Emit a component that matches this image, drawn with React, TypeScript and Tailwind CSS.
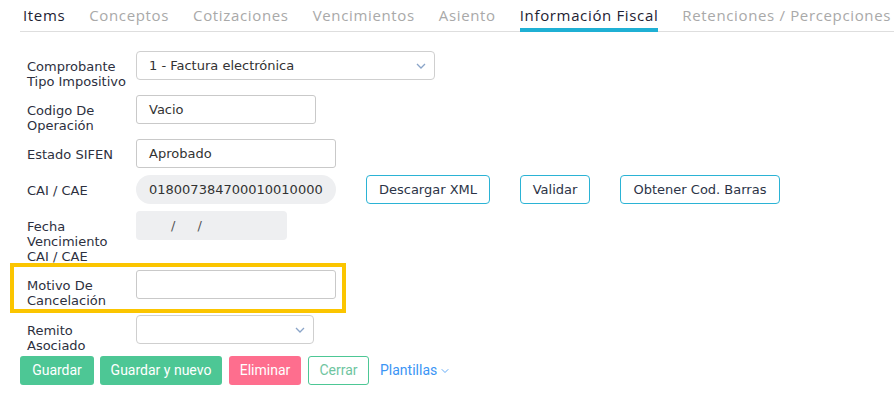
import { ChevronDown } from "lucide-react";

const tabs = [
  { label: "Items", tone: "dark" },
  { label: "Conceptos", tone: "muted" },
  { label: "Cotizaciones", tone: "muted" },
  { label: "Vencimientos", tone: "muted" },
  { label: "Asiento", tone: "muted" },
  { label: "Información Fiscal", tone: "active" },
  { label: "Retenciones / Percepciones", tone: "muted" },
];

function Chevron() {
  return (
    <svg width="10" height="6" viewBox="0 0 10 6" className="text-[#8aa4c8]">
      <polyline points="1,1 5,5 9,1" fill="none" stroke="currentColor" strokeWidth="1.3" />
    </svg>
  );
}

function Label({ lines }: { lines: string[] }) {
  return (
    <div className="w-[109px] shrink-0 pt-[8px] text-[13px] leading-[15px] text-[#2d3040]">
      {lines.map((l) => (
        <div key={l}>{l}</div>
      ))}
    </div>
  );
}

function TextBox({ value, w }: { value?: string; w: string }) {
  return (
    <div className={`${w} h-[29px] flex items-center px-[12px] border border-[#c9c9c9] rounded-[3px] text-[13px] text-[#333]`}>
      {value}
    </div>
  );
}

function SelectBox({ value, w }: { value?: string; w: string }) {
  return (
    <div className={`${w} h-[29px] flex items-center justify-between pl-[12px] pr-[8px] border border-[#cfcfcf] rounded-[4px] text-[13px] text-[#333]`}>
      <span>{value}</span>
      <Chevron />
    </div>
  );
}

function OutlineBtn({ children, w }: { children: string; w: string }) {
  return (
    <button className={`${w} h-[29px] border border-[#2bb3d5] rounded-[4px] text-[13px] text-[#2c3447]`}>
      {children}
    </button>
  );
}

export default function App() {
  return (
    <div className="w-[894px] h-[414px] bg-white overflow-hidden font-['DejaVu_Sans',Verdana,sans-serif]">
      <div className="ml-[20px] flex items-end h-[32px] border-b border-[#dedede] font-['Open_Sans',sans-serif] text-[15px] tracking-[0.65px]">
        <div className="flex gap-[24px] pl-[3px]">
          {tabs.map((t) => (
            <div
              key={t.label}
              className={
                t.tone === "active"
                  ? "pb-[1px] border-b-4 border-[#1fb0d4] text-[#1e2233] whitespace-nowrap -mb-px"
                  : t.tone === "dark"
                  ? "pb-[5px] text-[#1e2233] whitespace-nowrap"
                  : "pb-[5px] text-[#a9a9a9] whitespace-nowrap"
              }
            >
              {t.label}
            </div>
          ))}
        </div>
      </div>

      <div className="pl-[27px] pt-[19px] flex flex-col">
        <div className="flex mb-[6px]">
          <Label lines={["Comprobante", "Tipo Impositivo"]} />
          <SelectBox value="1 - Factura electrónica" w="w-[299px]" />
        </div>
        <div className="flex mb-[6px]">
          <Label lines={["Codigo De", "Operación"]} />
          <TextBox value="Vacio" w="w-[180px]" />
        </div>
        <div className="flex mb-[7px]">
          <Label lines={["Estado SIFEN"]} />
          <TextBox value="Aprobado" w="w-[200px]" />
        </div>
        <div className="flex mb-[7px] items-start">
          <Label lines={["CAI / CAE"]} />
          <div className="w-[200px] h-[29px] flex items-center px-[13px] rounded-full bg-[#eeeff1] text-[13px] text-[#333]">
            018007384700010010000
          </div>
          <div className="flex gap-[30px] ml-[30px]">
            <OutlineBtn w="w-[124px]">Descargar XML</OutlineBtn>
            <OutlineBtn w="w-[70px]">Validar</OutlineBtn>
            <OutlineBtn w="w-[160px]">Obtener Cod. Barras</OutlineBtn>
          </div>
        </div>
        <div className="flex mb-[6px]">
          <Label lines={["Fecha", "Vencimiento", "CAI / CAE"]} />
          <div className="w-[151px] h-[29px] flex items-center pl-[35px] gap-[22px] rounded-[4px] bg-[#eeeff1] text-[13px] text-[#555]">
            <span>/</span>
            <span>/</span>
          </div>
        </div>
        <div className="relative flex mb-[7px]">
          <div className="absolute left-[-17px] top-[-7px] w-[336px] h-[50px] border-4 border-[#fbc500] pointer-events-none" />
          <Label lines={["Motivo De", "Cancelación"]} />
          <TextBox w="w-[200px]" />
        </div>
        <div className="flex">
          <Label lines={["Remito", "Asociado"]} />
          <SelectBox w="w-[178px]" />
        </div>
      </div>

      <div className="ml-[20px] mt-[3px] flex items-center font-['Roboto',Arial,sans-serif] text-[14px]">
        <button className="w-[74px] h-[29px] rounded-[3px] bg-[#4dc795] text-white">Guardar</button>
        <button className="ml-[6px] w-[122px] h-[29px] rounded-[3px] bg-[#4dc795] text-white">Guardar y nuevo</button>
        <button className="ml-[7px] w-[72px] h-[29px] rounded-[3px] bg-[#fe6e8e] text-white">Eliminar</button>
        <button className="ml-[7px] w-[61px] h-[29px] rounded-[3px] border border-[#4dc795] text-[#6fc59f] bg-white">Cerrar</button>
        <button className="ml-[11px] flex items-center gap-[2px] text-[#3b95f5]">
          Plantillas
          <ChevronDown size={12} strokeWidth={1.6} />
        </button>
      </div>
    </div>
  );
}
